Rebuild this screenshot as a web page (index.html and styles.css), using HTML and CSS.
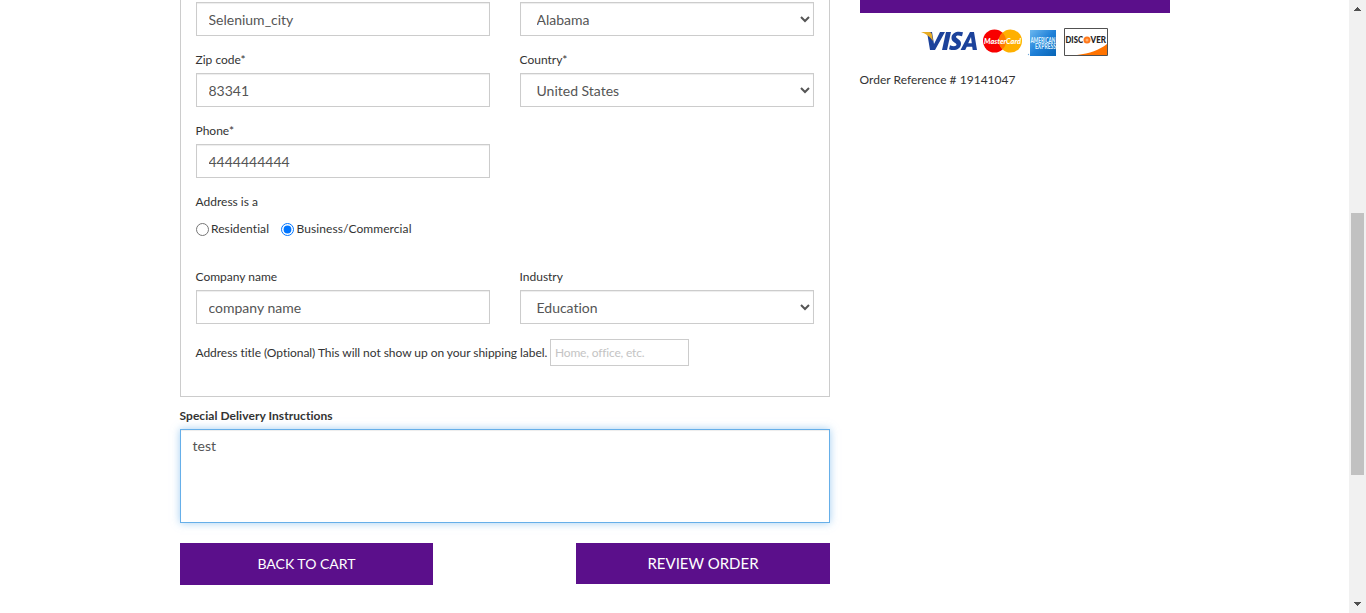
FILE: index.html
```html
<!DOCTYPE html>
<html lang="en">
<head>
<meta charset="utf-8">
<title>Checkout</title>
<link rel="stylesheet" href="styles.css">
</head>
<body>
<div class="viewport">
  <main class="page">
    <form class="checkout">
      <section class="address">
        <div class="row first">
          <input class="control" value="Selenium_city" aria-label="City">
          <select class="control" aria-label="State"><option>Alabama</option></select>
        </div>
        <div class="row">
          <label class="field"><span class="label">Zip code*</span><input class="control" value="83341"></label>
          <label class="field"><span class="label">Country*</span><select class="control"><option>United States</option></select></label>
        </div>
        <div class="row">
          <label class="field"><span class="label">Phone*</span><input class="control" value="4444444444"></label>
        </div>
        <div class="kind">
          <span class="label">Address is a</span>
          <div class="choices">
            <label class="choice"><input type="radio" name="kind"><span>Residential</span></label>
            <label class="choice"><input type="radio" name="kind" checked><span>Business/Commercial</span></label>
          </div>
        </div>
        <div class="row company">
          <label class="field"><span class="label">Company name</span><input class="control" value="company name"></label>
          <label class="field"><span class="label">Industry</span><select class="control"><option>Education</option></select></label>
        </div>
        <label class="nickname"><span class="nickname-text">Address title (Optional) This will not show up on your shipping label.</span><input class="small-control" placeholder="Home, office, etc."></label>
      </section>
      <label class="instructions"><span class="strong-label">Special Delivery Instructions</span><textarea class="notes">test</textarea></label>
      <div class="actions">
        <button class="button back" type="button">BACK TO CART</button>
        <button class="button review" type="button">REVIEW ORDER</button>
      </div>
    </form>
    <aside class="summary">
      <div class="order-button"></div>
      <div class="cards">
        <svg class="card-logos" width="188" height="30" viewBox="0 0 188 30" role="img" aria-label="Accepted cards">
          <defs>
            <linearGradient id="amex" x1="0" y1="0" x2="1" y2="1"><stop offset="0" stop-color="#6cb8ef"/><stop offset=".5" stop-color="#1f80d8"/><stop offset="1" stop-color="#0865b5"/></linearGradient>
          </defs>
          <g fill="#1c429b">
            <path d="M7 5h5l2 12 6-12h5L15 23h-5z"/>
            <path d="M26 5h5l-4 18h-5z"/>
            <path d="M43 5.300l-1 4c-4-1.500-6-.8-6 .5 0 2 5.500 2.600 5 7.200-.6 5.800-6.700 7.200-12 5.200l1-4c3 1.500 6.500 1.400 6.500-.6 0-2.200-5.500-2.600-5-7.200.5-5.300 6.500-6.700 11.500-5.100z"/>
            <path fill-rule="evenodd" d="M50 5h4l3 18h-4.300l-.5-3.300h-5.400L45.200 23h-4.700zM51 10l-2.800 6.300h3.600z"/>
          </g>
          <path fill="#e8ac24" d="M1 5h8c2 0 2.700 1 3 3l1 6C10 9.500 6 6.500 1 5z"/>
          <circle cx="74.500" cy="14" r="11.500" fill="#f80000"/>
          <circle cx="90.500" cy="14" r="11.500" fill="#ffb000"/>
          <path fill="#ff7900" d="M82.500 5.700a11.500 11.500 0 0 1 0 16.600a11.500 11.500 0 0 1 0-16.600z"/>
          <text class="master" x="64" y="17" textLength="37" lengthAdjust="spacingAndGlyphs">MasterCard</text>
          <path fill="url(#amex)" d="M110 3h26v26h-26z"/>
          <text class="amex" x="110.500" y="16" textLength="25" lengthAdjust="spacingAndGlyphs">AMERICAN</text>
          <text class="amex" x="115" y="22" textLength="21" lengthAdjust="spacingAndGlyphs">EXPRESS</text>
          <circle cx="108.500" cy="27.500" r=".7" fill="#74a9d8"/>
          <path fill="#fff" stroke="#515151" d="M144.500 1.500h43v27h-43z"/>
          <path fill="#ff7300" d="M187 17v11h-30c13-1.500 22-5 30-11z"/>
          <text class="discover" x="145.500" y="16" textLength="17.500" lengthAdjust="spacingAndGlyphs">DISC</text>
          <circle cx="167" cy="13" r="3.500" fill="#ff781b"/><circle cx="167" cy="13" r="1.500" fill="#ffb16f"/>
          <text class="discover" x="170.500" y="16" textLength="15.500" lengthAdjust="spacingAndGlyphs">VER</text>
        </svg>
      </div>
      <p class="reference">Order Reference # 19141047</p>
    </aside>
  </main>
  <div class="scrollbar" aria-hidden="true">
    <svg class="arrow" width="7" height="4" viewBox="0 0 7 4"><path d="M3 0h1v1h1v1h1v1h1v1H0V3h1V2h1V1h1z"/></svg>
    <div class="thumb"></div>
    <svg class="arrow down" width="7" height="4" viewBox="0 0 7 4"><path d="M0 0h7v1H6v1H5v1H4v1H3V3H2V2H1V1H0z"/></svg>
  </div>
</div>
</body>
</html>
```
FILE: styles.css
```css
* { box-sizing: border-box; }
body { margin: 0; background: #fff; color: #333; font: 12px/20px Lato, sans-serif; font-variant-ligatures: none; overflow: hidden; }
.viewport { display: flex; height: 613px; }
.page { display: flex; flex: 1; gap: 30px; padding-left: 180px; align-items: flex-start; }
.checkout { width: 650px; }
.address { height: 397px; padding: 2px 15px 0; border: solid #ccc; border-width: 0 1px 1px; }
.row { display: grid; grid-template-columns: 294px 294px; gap: 30px; height: 71px; align-items: start; }
.row.first { height: 48px; }
.field, .label { display: block; }
.label { height: 23px; text-indent: -.5px; }
.control { display: block; width: 100%; height: 34px; margin: 0; padding: 6px 12px 6px 11.5px; border: 1px solid #ccc; border-radius: 0; background-color: #fff; box-shadow: inset 0 1px 1px rgba(0,0,0,.075); color: #555; font: 14px/20px Lato, sans-serif; font-variant-ligatures: none; }
select.control { padding-right: 13px; }
.kind { height: 75px; }
.choices { display: flex; gap: 12px; height: 20px; margin-top: 4px; }
.choice { display: flex; align-items: center; gap: 2px; letter-spacing: .08px; }
.choice input { width: 13px; height: 13px; margin: 1px 0 0; }
.choice + .choice { gap: 2.5px; }
.company { height: 72px; }
.nickname { display: flex; align-items: center; gap: 3px; height: 27px; }
.nickname-text { width: 351px; white-space: nowrap; letter-spacing: -.045px; text-indent: -.5px; }
.small-control { width: 139px; height: 27px; padding: 1px 4px; border: 1px solid #ccc; border-radius: 0; font: 12px Lato, sans-serif; letter-spacing: -.18px; }
.small-control::placeholder { color: #c4c4c4; }
.instructions { display: block; padding-top: 9px; }
.strong-label { display: block; height: 23px; font-weight: 700; text-indent: -.5px; letter-spacing: .06px; }
.notes { display: block; width: 650px; height: 94px; padding: 6px 12px 6px 11.5px; resize: none; border: 1px solid #66afe9; outline: 0; box-shadow: inset 0 1px 1px rgba(0,0,0,.075), 0 0 8px rgba(102,175,233,.6); color: #555; font: 14px/20px Lato, sans-serif; }
.actions { display: flex; justify-content: space-between; align-items: flex-start; margin-top: 20px; }
.button { padding: 0; border: 0; background: #5b0f8b; color: #fff; font: 15px/20px Lato, sans-serif; }
.back { width: 253px; height: 42px; font-size: 14px; }
.review { width: 254px; height: 41px; padding-bottom: 2px; }
.summary { width: 310px; }
.order-button { height: 13px; background: #5b0f8b; }
.cards { padding: 14px 0 0 60px; height: 57px; }
.card-logos { display: block; }
.card-logos text { font-family: Lato, sans-serif; font-weight: 700; }
.card-logos .master { fill: #fff; font-size: 8px; font-style: italic; font-weight: 900; }
.card-logos .amex { fill: #d8effd; font-size: 6.5px; font-weight: 900; }
.card-logos .discover { fill: #222; font-size: 8.5px; font-weight: 900; }
.reference { margin: 0; text-indent: -.5px; letter-spacing: .02px; }
.scrollbar { display: flex; flex-direction: column; align-items: center; width: 17px; height: 613px; padding-top: 7px; background: #f1f1f1; }
.arrow { display: block; fill: #505050; }
.thumb { width: 13px; height: 262px; margin-top: 202px; background: #c1c1c1; }
.down { margin-top: 127px; }
```
